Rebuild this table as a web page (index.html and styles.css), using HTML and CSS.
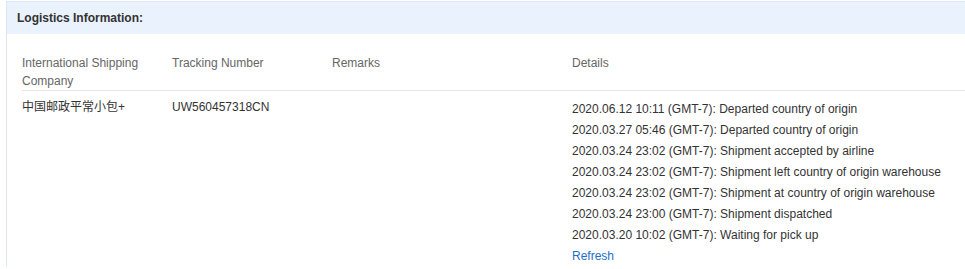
FILE: index.html
```html
<!DOCTYPE html>
<html>
<head>
<meta charset="utf-8">
<link rel="stylesheet" href="styles.css">
</head>
<body>
<div class="panel">
  <div class="panel-head">Logistics Information:</div>
  <div class="panel-body">
    <table class="logi">
      <colgroup>
        <col class="c1"><col class="c2"><col class="c3"><col class="c4">
      </colgroup>
      <thead>
        <tr>
          <th>International Shipping Company</th>
          <th>Tracking Number</th>
          <th>Remarks</th>
          <th>Details</th>
        </tr>
      </thead>
      <tbody>
        <tr>
          <td>中国邮政平常小包+</td>
          <td>UW560457318CN</td>
          <td></td>
          <td class="details">
            <div>2020.06.12 10:11 (GMT-7): Departed country of origin</div>
            <div>2020.03.27 05:46 (GMT-7): Departed country of origin</div>
            <div>2020.03.24 23:02 (GMT-7): Shipment accepted by airline</div>
            <div>2020.03.24 23:02 (GMT-7): Shipment left country of origin warehouse</div>
            <div>2020.03.24 23:02 (GMT-7): Shipment at country of origin warehouse</div>
            <div>2020.03.24 23:00 (GMT-7): Shipment dispatched</div>
            <div>2020.03.20 10:02 (GMT-7): Waiting for pick up</div>
            <div><a class="refresh" href="#">Refresh</a></div>
          </td>
        </tr>
      </tbody>
    </table>
  </div>
</div>
</body>
</html>
```
FILE: styles.css
```css
html, body {
  margin: 0;
  padding: 0;
  background: #fff;
}
body {
  font-family: "Liberation Sans", Arial, "Noto Sans CJK SC", sans-serif;
  font-size: 12px;
  color: #333;
}
.panel {
  margin: 1px 0 0 6px;
  border-top: 1px solid #dce8f8;
  border-left: 1px solid #dce8f8;
}
.panel-head {
  height: 32px;
  line-height: 32px;
  background: #eaf2fd;
  padding-left: 10px;
  font-weight: bold;
  font-size: 12px;
  color: #333;
}
.panel-body {
  padding: 20px 0 0 15px;
}
.logi {
  border-collapse: collapse;
  table-layout: fixed;
  width: 100%;
}
.c1 { width: 150px; }
.c2 { width: 160px; }
.c3 { width: 240px; }
.logi th {
  text-align: left;
  font-weight: normal;
  color: #666;
  line-height: 18px;
  vertical-align: top;
  padding: 0 15px 0 0;
  border-bottom: 1px solid #e6e6e6;
}
.logi td {
  vertical-align: top;
  line-height: 18px;
  padding: 7px 10px 0 0;
  color: #333;
}
.logi td.details {
  line-height: 21px;
  padding-top: 8px;
}
.refresh {
  color: #1e6ec8;
  text-decoration: none;
}
```
